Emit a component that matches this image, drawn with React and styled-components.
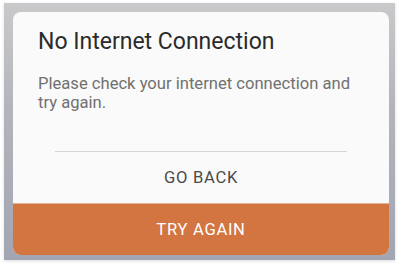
import React from "react";
import styled, { createGlobalStyle } from "styled-components";

const Global = createGlobalStyle`
  html, body { margin: 0; padding: 0; background: #ffffff; }
  body { font-family: Roboto, "Noto Sans", Arial, sans-serif; }
`;

const Page = styled.div`
  width: 403px;
  height: 267px;
  padding: 3px 0 0 4px;
  box-sizing: border-box;
`;

const Frame = styled.div`
  width: 391px;
  height: 257px;
  box-sizing: border-box;
  padding: 9px 6px 5px 9px;
  background: linear-gradient(180deg, #c9c9cb 0%, #b3b5bb 40%, #a2a6b2 100%);
  box-shadow: 0 1px 3px rgba(0, 0, 0, 0.15);
`;

const Card = styled.div`
  width: 376px;
  height: 243px;
  background: #fafafa;
  border-radius: 8px;
  overflow: hidden;
  display: flex;
  flex-direction: column;
`;

const Body = styled.div`
  padding: 16px 25px 0 25px;
  flex: 1;
  display: flex;
  flex-direction: column;
`;

const Title = styled.h2`
  margin: 0;
  font-weight: 400;
  font-size: 23px;
  line-height: 28px;
  color: #2b2b2b;
`;

const Message = styled.p`
  margin: 18px 0 0 0;
  font-size: 16.6px;
  line-height: 19px;
  color: #707070;
`;

const Divider = styled.div`
  height: 1px;
  background: #d6d6d6;
  margin: 0 17px;
`;

const Spacer = styled.div`
  flex: 1;
`;

const Button = styled.div`
  height: ${(p) => p.h}px;
  display: flex;
  align-items: center;
  justify-content: center;
  font-size: 16.6px;
  letter-spacing: 0.7px;
  color: ${(p) => (p.primary ? "#ffffff" : "#4a4a4a")};
  background: ${(p) => (p.primary ? "#d27540" : "transparent")};
  border-top: ${(p) => (p.primary ? "1px solid #e4b394" : "none")};
  box-sizing: border-box;
`;

export default function App() {
  return (
    <Page>
      <Global />
      <Frame>
        <Card>
          <Body>
            <Title>No Internet Connection</Title>
            <Message>Please check your internet connection and try again.</Message>
            <Spacer />
            <Divider />
          </Body>
          <Button h={51}>GO BACK</Button>
          <Button h={52} primary>TRY AGAIN</Button>
        </Card>
      </Frame>
    </Page>
  );
}
